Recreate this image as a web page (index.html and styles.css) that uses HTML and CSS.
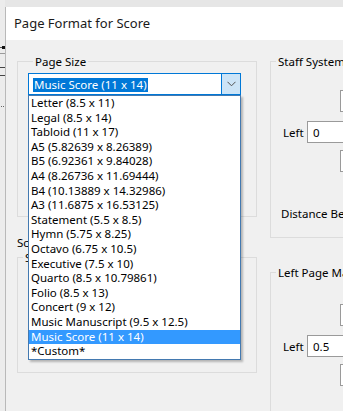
FILE: index.html
```html
<!DOCTYPE html>
<html lang="en">
<head>
    <meta charset="UTF-8">
    <meta name="viewport" content="width=device-width, initial-scale=1.0">
    <title>Page Format for Score</title>
    <link rel="stylesheet" href="styles.css">
</head>
<body>
    <div class="screen">
        <!-- score window behind the dialog -->
        <div class="desk">
            <svg width="5" height="120" viewBox="0 0 5 120">
                <rect x="0" y="47" width="5" height="1" fill="#555"/>
                <rect x="2" y="46" width="3" height="3" fill="#111"/>
                <rect x="0" y="53" width="5" height="1" fill="#9a9a9a"/>
                <rect x="0" y="67" width="5" height="1" fill="#444"/>
                <rect x="0" y="75" width="5" height="1" fill="#444"/>
                <rect x="1" y="106" width="1" height="1" fill="#666"/>
                <rect x="3" y="106" width="1" height="1" fill="#666"/>
            </svg>
        </div>

        <div class="dialog">
            <div class="titlebar">Page Format for Score</div>

            <div class="dialog-body">
                <div class="col-left">
                    <fieldset class="group page-size">
                        <legend>Page Size</legend>
                        <div class="combo">
                            <span class="combo-value"><span class="sel">Music Score (11 x 14)</span></span>
                            <span class="combo-btn">
                                <svg width="9" height="6" viewBox="0 0 9 6"><path d="M0.5 0.8 L4.5 4.8 L8.5 0.8" fill="none" stroke="#505050" stroke-width="1"/></svg>
                            </span>

                            <ul class="combo-list">
                                <li>Letter (8.5 x 11)</li>
                                <li>Legal (8.5 x 14)</li>
                                <li>Tabloid (11 x 17)</li>
                                <li>A5 (5.82639 x 8.26389)</li>
                                <li>B5 (6.92361 x 9.84028)</li>
                                <li>A4 (8.26736 x 11.69444)</li>
                                <li>B4 (10.13889 x 14.32986)</li>
                                <li>A3 (11.6875 x 16.53125)</li>
                                <li>Statement (5.5 x 8.5)</li>
                                <li>Hymn (5.75 x 8.25)</li>
                                <li>Octavo (6.75 x 10.5)</li>
                                <li>Executive (7.5 x 10)</li>
                                <li>Quarto (8.5 x 10.79861)</li>
                                <li>Folio (8.5 x 13)</li>
                                <li>Concert (9 x 12)</li>
                                <li>Music Manuscript (9.5 x 12.5)</li>
                                <li class="active">Music Score (11 x 14)</li>
                                <li>*Custom*</li>
                            </ul>
                        </div>
                    </fieldset>

                    <div class="section-label">Scaling</div>

                    <fieldset class="group scaling">
                        <legend>Staff Scaling</legend>
                        <div class="scale-row">
                            <span>Rounding System</span>
                            <span>100 %</span>
                        </div>
                    </fieldset>
                </div>

                <div class="col-right">
                    <fieldset class="group margins staff">
                        <legend>Staff System Margins</legend>
                        <div class="cross-top"><input type="text" value=""></div>
                        <div class="cross-mid">
                            <label>Left</label>
                            <input type="text" value="0">
                        </div>
                        <div class="cross-bottom"><input type="text" value=""></div>
                        <div class="distance">Distance Between Systems</div>
                    </fieldset>

                    <fieldset class="group margins page">
                        <legend>Left Page Margins</legend>
                        <div class="cross-top"><input type="text" value=""></div>
                        <div class="cross-mid">
                            <label>Left</label>
                            <input type="text" value="0.5">
                        </div>
                        <div class="cross-bottom"><input type="text" value=""></div>
                    </fieldset>
                </div>
            </div>
        </div>
    </div>
</body>
</html>
```
FILE: styles.css
```css
/* Reset styles */
* {
    margin: 0;
    padding: 0;
    box-sizing: border-box;
}

body {
    font-family: 'Noto Sans', 'Open Sans', sans-serif;
    font-size: 11.5px;
    color: #000;
    background-color: #e6e6e6;
    overflow: hidden;
}

.screen {
    display: flex;
    width: 343px;
    height: 411px;
    overflow: hidden;
}

.desk {
    width: 5px;
    flex: none;
    background-color: #ececec;
}

.desk svg {
    display: block;
}

.dialog {
    flex: 1;
    min-width: 0;
    margin-top: 7px;
    border-left: 1px solid #b9b9b9;
    background-color: #f0f0f0;
    overflow: hidden;
}

.titlebar {
    height: 33px;
    line-height: 32px;
    padding-left: 8px;
    background-color: #fff;
    font-size: 13px;
    color: #1a1a1a;
    white-space: nowrap;
}

.dialog-body {
    display: flex;
    gap: 13px;
    padding-left: 11px;
    width: 520px;
}

.col-left {
    width: 240px;
    flex: none;
    padding-top: 14px;
}

.col-right {
    width: 240px;
    flex: none;
    padding-top: 14px;
}

/* group boxes */
.group {
    border: 1px solid #dcdcdc;
    min-width: 0;
}

.group legend {
    margin-left: 5px;
    padding: 0 2px;
    line-height: 15px;
    white-space: nowrap;
}

.page-size {
    padding: 4px 15px 121px 10px;
}

.section-label {
    margin-top: 18px;
    line-height: 15px;
}

.scaling {
    padding: 78px 10px 14px 0;
}

.scale-row {
    display: grid;
    grid-template-columns: 129px auto;
    padding-left: 18px;
    line-height: 15px;
}

/* combo box with its open list */
.combo {
    position: relative;
    display: flex;
    height: 22px;
    border: 1px solid #0078d7;
    background-color: #fff;
}

.combo-value {
    flex: 1;
    padding: 3px 0 0 4px;
}

.combo-value .sel {
    display: inline-block;
    padding: 0 1px;
    line-height: 14px;
    background-color: #0078d7;
    color: #fff;
}

.combo-btn {
    width: 19px;
    border-left: 1px solid #0078d7;
    background-color: #cce4f7;
    display: flex;
    align-items: center;
    justify-content: center;
}

.combo-list {
    position: absolute;
    top: 21px;
    left: -1px;
    width: 213px;
    list-style: none;
    background-color: #fff;
    border: 1px solid #4379b0;
    box-shadow: 2px 2px 2px rgba(0, 0, 0, 0.25);
    z-index: 5;
}

.combo-list li {
    line-height: 14.6px;
    padding-left: 2px;
    white-space: nowrap;
}

.combo-list li.active {
    background-color: #3399ff;
    color: #fff;
}

/* margin crosses */
.margins {
    padding: 0;
}

.staff {
    padding-top: 21px;
    padding-bottom: 16px;
}

.page {
    margin-top: 27px;
    padding-top: 24px;
    padding-bottom: 40px;
}

.margins input {
    width: 70px;
    height: 22px;
    border: 1px solid #9a9a9a;
    background-color: #fff;
    font: inherit;
    padding: 0 5px;
    color: #000;
}

.cross-top,
.cross-bottom {
    padding-left: 69px;
}

.cross-mid {
    display: flex;
    align-items: center;
    margin-top: 9px;
}

.cross-bottom {
    margin-top: 7px;
}

.cross-mid label {
    width: 36px;
    padding-left: 12px;
}

.distance {
    margin-top: 34px;
    padding-left: 10px;
    line-height: 15px;
    white-space: nowrap;
}
```
